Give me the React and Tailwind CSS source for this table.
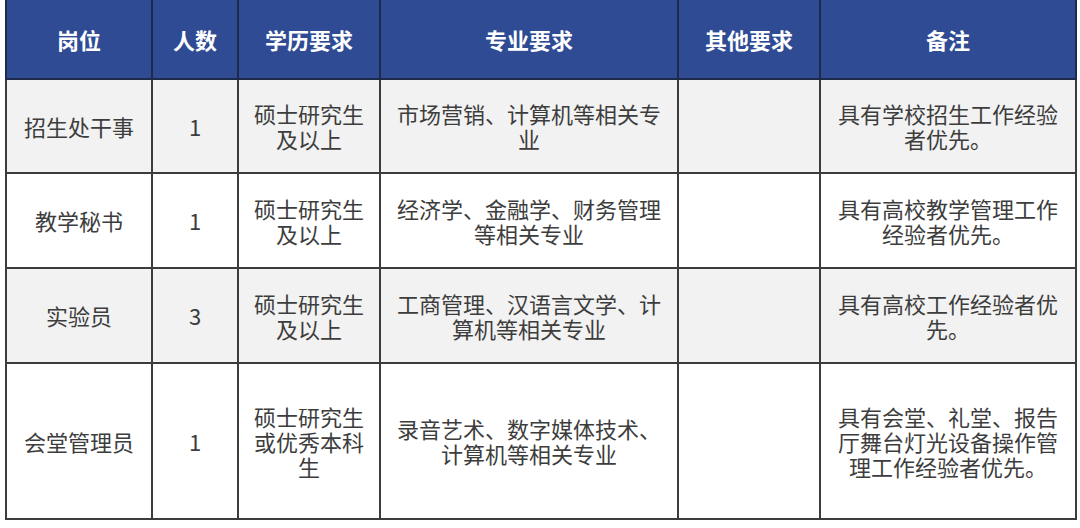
import React from 'react'

const rows = [
  { pos: '招生处干事', num: '1', edu: '硕士研究生及以上', major: '市场营销、计算机等相关专业', other: '', note: '具有学校招生工作经验者优先。', h: 'h-[94px]', bg: 'bg-[#f2f2f2]' },
  { pos: '教学秘书', num: '1', edu: '硕士研究生及以上', major: '经济学、金融学、财务管理等相关专业', other: '', note: '具有高校教学管理工作经验者优先。', h: 'h-[95px]', bg: 'bg-white' },
  { pos: '实验员', num: '3', edu: '硕士研究生及以上', major: '工商管理、汉语言文学、计算机等相关专业', other: '', note: '具有高校工作经验者优先。', h: 'h-[95px]', bg: 'bg-[#f2f2f2]' },
  { pos: '会堂管理员', num: '1', edu: '硕士研究生或优秀本科生', major: '录音艺术、数字媒体技术、计算机等相关专业', other: '', note: '具有会堂、礼堂、报告厅舞台灯光设备操作管理工作经验者优先。', h: 'h-[156px]', bg: 'bg-white' },
]

const heads = ['岗位', '人数', '学历要求', '专业要求', '其他要求', '备注']

export default function App() {
  return (
    <div className="w-[1080px] h-[528px] bg-white overflow-hidden" style={{ fontFamily: '"Noto Sans CJK SC", "Microsoft YaHei", sans-serif' }}>
      <table className="ml-[5px] w-[1070px] table-fixed border-collapse text-[22px] leading-[25px]">
        <colgroup>
          <col className="w-[146px]" />
          <col className="w-[86px]" />
          <col className="w-[142px]" />
          <col className="w-[298px]" />
          <col className="w-[142px]" />
          <col className="w-[256px]" />
        </colgroup>
        <thead>
          <tr className="h-[79px] bg-[#2e4b94]">
            {heads.map((t, i) => (
              <th key={i} className="border-2 border-t-0 border-[#1e2a4a] px-2 text-center font-bold text-white">
                {t}
              </th>
            ))}
          </tr>
        </thead>
        <tbody>
          {rows.map((r, i) => (
            <tr key={i} className={`${r.h} ${r.bg}`}>
              <td className="border-2 border-[#3c3c3c] px-2 text-center text-[#3d3d3d]">{r.pos}</td>
              <td className="border-2 border-[#3c3c3c] px-2 text-center text-[#3d3d3d]">{r.num}</td>
              <td className="border-2 border-[#3c3c3c] px-2 text-center text-[#3d3d3d]">{r.edu}</td>
              <td className="border-2 border-[#3c3c3c] px-2 text-center text-[#3d3d3d]">{r.major}</td>
              <td className="border-2 border-[#3c3c3c] px-2 text-center text-[#3d3d3d]">{r.other}</td>
              <td className="border-2 border-[#3c3c3c] px-2 text-center text-[#3d3d3d]">{r.note}</td>
            </tr>
          ))}
        </tbody>
      </table>
    </div>
  )
}
